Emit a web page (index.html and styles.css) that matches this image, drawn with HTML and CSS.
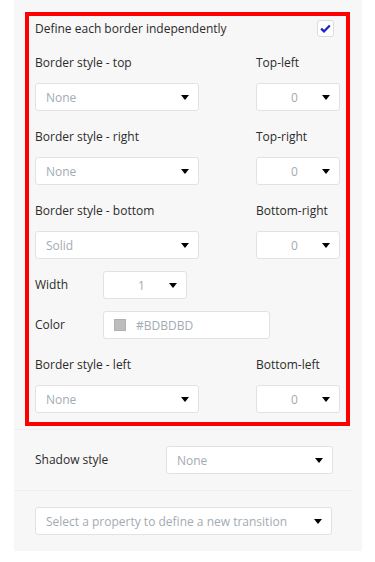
FILE: index.html
```html
<!DOCTYPE html>
<html>
<head>
<meta charset="utf-8">
<link rel="stylesheet" href="styles.css">
</head>
<body>
<div class="panel">
  <div class="border-box">
    <div class="check-row">
      <span class="label">Define each border independently</span>
      <span class="checkbox">
        <svg width="11" height="9" viewBox="0 0 11 9"><polyline points="1.2,4.6 4,7.4 9.8,1.4" fill="none" stroke="#2020c8" stroke-width="2.2"/></svg>
      </span>
    </div>

    <div class="pair">
      <div class="col">
        <span class="label">Border style - top</span>
        <div class="dd dd-wide"><span class="val">None</span><span class="arrow"></span></div>
      </div>
      <div class="col">
        <span class="label">Top-left</span>
        <div class="dd dd-num"><span class="val">0</span><span class="arrow"></span></div>
      </div>
    </div>

    <div class="pair">
      <div class="col">
        <span class="label">Border style - right</span>
        <div class="dd dd-wide"><span class="val">None</span><span class="arrow"></span></div>
      </div>
      <div class="col">
        <span class="label">Top-right</span>
        <div class="dd dd-num"><span class="val">0</span><span class="arrow"></span></div>
      </div>
    </div>

    <div class="pair pair-tight">
      <div class="col">
        <span class="label">Border style - bottom</span>
        <div class="dd dd-wide"><span class="val">Solid</span><span class="arrow"></span></div>
      </div>
      <div class="col">
        <span class="label">Bottom-right</span>
        <div class="dd dd-num"><span class="val">0</span><span class="arrow"></span></div>
      </div>
    </div>

    <div class="inline-row">
      <span class="label inline-label">Width</span>
      <div class="dd dd-num"><span class="val">1</span><span class="arrow"></span></div>
    </div>

    <div class="inline-row inline-row-last">
      <span class="label inline-label">Color</span>
      <div class="color-input"><span class="swatch"></span><span class="val">#BDBDBD</span></div>
    </div>

    <div class="pair pair-last">
      <div class="col">
        <span class="label">Border style - left</span>
        <div class="dd dd-wide"><span class="val">None</span><span class="arrow"></span></div>
      </div>
      <div class="col">
        <span class="label">Bottom-left</span>
        <div class="dd dd-num"><span class="val">0</span><span class="arrow"></span></div>
      </div>
    </div>
  </div>

  <div class="section">
    <span class="label section-label">Shadow style</span>
    <div class="dd dd-mid"><span class="val">None</span><span class="arrow"></span></div>
  </div>

  <div class="section">
    <div class="dd dd-full"><span class="val">Select a property to define a new transition</span><span class="arrow"></span></div>
  </div>
</div>
</body>
</html>
```

FILE: styles.css
```css
html, body {
  margin: 0;
  padding: 0;
  background: #ffffff;
}

body {
  font-family: "Open Sans", "Liberation Sans", sans-serif;
  font-size: 12px;
  color: #2b2b2b;
}

.panel {
  margin-left: 14px;
  width: 348px;
  background: #f7f7f7;
  padding-top: 12px;
}

.border-box {
  margin: 0 12px 3px 11px;
  border: 4px solid #ff0000;
  padding: 4px 6px 9px 6px;
  display: flex;
  flex-direction: column;
}

.label {
  line-height: 18px;
  white-space: nowrap;
}

.check-row {
  display: flex;
  justify-content: space-between;
  align-items: center;
  height: 17px;
  margin-bottom: 17px;
}

.checkbox {
  width: 17px;
  height: 17px;
  box-sizing: border-box;
  border: 1px solid #dcdcdc;
  border-radius: 3px;
  background: #ffffff;
  margin-right: 6px;
  display: flex;
  align-items: center;
  justify-content: center;
}

.pair {
  display: grid;
  grid-template-columns: 164px 84px;
  column-gap: 57px;
  margin-bottom: 17px;
}

.pair-tight {
  margin-bottom: 12px;
}

.pair-last {
  margin-bottom: 0;
}

.col {
  display: flex;
  flex-direction: column;
  gap: 11px;
}

.dd {
  height: 28px;
  box-sizing: border-box;
  border: 1px solid #e2e2e2;
  border-radius: 3px;
  background: #ffffff;
  display: flex;
  align-items: center;
  padding: 0 9px 0 10px;
}

.val {
  color: #a3abb2;
  white-space: nowrap;
  flex: 1;
}

.arrow {
  width: 0;
  height: 0;
  border-left: 4.5px solid transparent;
  border-right: 4.5px solid transparent;
  border-top: 5px solid #000000;
  margin-top: 1px;
  flex: none;
}

.dd-wide {
  width: 164px;
}

.dd-num {
  width: 84px;
}

.dd-num .val {
  text-align: center;
}

.inline-row {
  display: flex;
  align-items: center;
  margin-bottom: 12px;
}

.inline-row-last {
  margin-bottom: 17px;
}

.inline-label {
  width: 68px;
}

.color-input {
  width: 167px;
  height: 28px;
  box-sizing: border-box;
  border: 1px solid #e2e2e2;
  border-radius: 3px;
  background: #ffffff;
  display: flex;
  align-items: center;
  padding-left: 10px;
  gap: 10px;
}

.swatch {
  width: 12px;
  height: 12px;
  box-sizing: border-box;
  background: #bdbdbd;
  border: 1px solid #b0b0b0;
}

.section {
  border-top: 1px solid #efefef;
  margin-right: 9px;
  padding: 16px 0 16px 21px;
  display: flex;
  align-items: center;
}

.section-label {
  width: 131px;
}

.dd-mid {
  width: 167px;
}

.dd-full {
  width: 297px;
}
```
